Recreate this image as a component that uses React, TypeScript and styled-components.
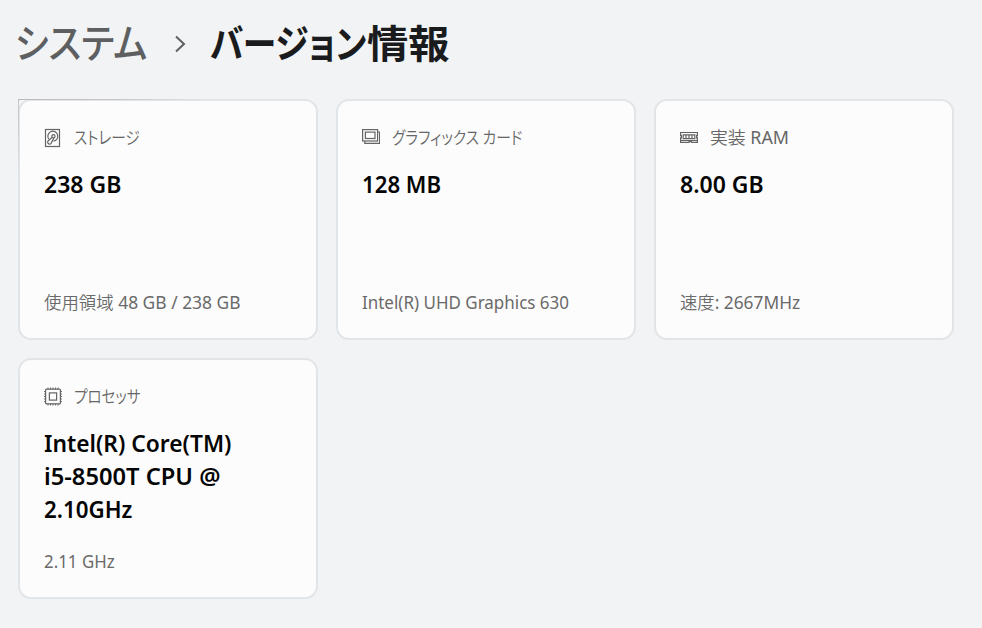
import React from "react";
import styled, { createGlobalStyle } from "styled-components";

const Global = createGlobalStyle`
  * { box-sizing: border-box; }
  body {
    margin: 0;
    background: #f1f3f5;
    font-family: "Noto Sans", "Noto Sans CJK JP", sans-serif;
    overflow: hidden;
  }
`;

const Page = styled.main`
  height: 628px;
  padding: 11px 0 0 18px;
  background: #f1f3f5;
`;

const Breadcrumb = styled.header`
  display: flex;
  align-items: center;
  height: 60px;
  margin: 0 0 28px -3px;
`;

const Crumb = styled.span<{ $current?: boolean; $width: number; $scale: number }>`
  flex: none;
  width: ${(p) => p.$width}px;
  white-space: nowrap;
  font-family: "Noto Sans CJK JP", sans-serif;
  font-size: ${(p) => (p.$current ? 39 : 40)}px;
  line-height: 60px;
  font-weight: ${(p) => (p.$current ? 700 : 500)};
  color: ${(p) => (p.$current ? "#1a1b1c" : "#5d5f61")};
  font-feature-settings: "palt";
  transform: scaleX(${(p) => p.$scale});
  transform-origin: left;
`;

const Chevron = styled.svg`
  flex: none;
  width: 12px;
  height: 18px;
  margin: 5px 24px 0 30px;
`;

const Grid = styled.section`
  display: grid;
  grid-template-columns: repeat(3, 300px);
  grid-auto-rows: 241px;
  gap: 18px;
`;

const Card = styled.article<{ $lit?: boolean }>`
  position: relative;
  display: flex;
  flex-direction: column;
  padding: 23px 24px;
  border: 2px solid #e2e5e8;
  border-radius: 13px;
  background: #fcfcfc;

  &::before {
    content: "";
    display: ${(p) => (p.$lit ? "block" : "none")};
    position: absolute;
    inset: -2px;
    background:
      linear-gradient(to right, #bdb9b9, #c8c5c5 50%, transparent) top left / 190px 1px no-repeat,
      linear-gradient(to bottom, #c4c2c2, transparent) top left / 1px 80px no-repeat;
  }
`;

const CardHead = styled.div`
  display: flex;
  align-items: center;
  height: 26px;
  gap: 12px;

  svg {
    flex: none;
    width: 18px;
    height: 20px;
    margin-top: 2px;
    fill: none;
    stroke: #646464;
    stroke-width: 1.2;
  }
`;

const Cjk = styled.span`
  font-weight: 350;
`;

const Label = styled.span<{ $scale: number }>`
  white-space: nowrap;
  font-size: 17.5px;
  line-height: 26px;
  font-weight: 400;
  color: #666;
  font-feature-settings: "palt";
  transform: scaleX(${(p) => p.$scale});
  transform-origin: left;
`;

const Value = styled.div`
  margin-top: 18px;
`;

const ValueLine = styled.div<{ $scale: number }>`
  white-space: nowrap;
  font-size: 23px;
  line-height: 33px;
  font-weight: 600;
  color: #050505;
  transform: scaleX(${(p) => p.$scale});
  transform-origin: left;
`;

const Detail = styled.div<{ $scale: number }>`
  margin-top: auto;
  white-space: nowrap;
  font-size: 17.5px;
  line-height: 26px;
  font-weight: 400;
  color: #6a6a6a;
  transform: scaleX(${(p) => p.$scale});
  transform-origin: left;
`;

const DiskIcon = () => (
  <svg viewBox="0 0 18 20">
    <rect x="1.5" y="1.5" width="14" height="17" />
    <path d="M4.8 11.2A5 5 0 1 1 9.4 13.2" />
    <circle cx="9.4" cy="8.2" r="1.6" />
    <path d="M8 9.4 4.3 12.8a1.9 1.9 0 1 0 2.6 2.8L9.9 10" />
  </svg>
);

const GraphicsIcon = () => (
  <svg viewBox="0 0 18 20">
    <rect x=".6" y="1.6" width="15" height="11.4" />
    <rect x="3.4" y="4.1" width="9.6" height="6.4" />
    <path d="M15.6 4h2v11.4H2.8V13" />
  </svg>
);

const MemoryIcon = () => (
  <svg viewBox="0 0 18 20">
    <path d="M.6 4.5h16.8v3.1h-.8v2.2h.8v4.7h-6v-1.2H9v1.2H.6V9.8h.8V7.6H.6Z" />
    <path d="M3.2 6.8h11.6v3.8H3.2ZM6 7v3.5M9 7v3.5M12 7v3.5M1 12.6h16" />
  </svg>
);

const ChipIcon = () => (
  <svg viewBox="0 0 18 20">
    <rect x="1.6" y="2.1" width="14.8" height="14.8" rx="1" />
    <rect x="5.4" y="5.9" width="7.2" height="7.2" />
    <path
      d="M4 .5v2m2.5-2v2M9 .5v2m2.5-2v2M14 .5v2M4 16.5v2m2.5-2v2M9 16.5v2m2.5-2v2M14 16.5v2M0 4.5h2M0 7h2M0 9.5h2M0 12h2M0 14.5h2M16 4.5h2M16 7h2m-2 2.5h2M16 12h2m-2 2.5h2"
      strokeWidth=".9"
    />
  </svg>
);

type TextRun = { cjk?: string; text?: string; scale: number };

type Spec = {
  icon: React.ReactNode;
  label: TextRun;
  value: TextRun[];
  detail: TextRun;
  lit?: boolean;
};

const specs: Spec[] = [
  {
    icon: <DiskIcon />,
    label: { cjk: "ストレージ", scale: 0.835 },
    value: [{ text: "238 GB", scale: 1 }],
    detail: { cjk: "使用領域", text: " 48 GB / 238 GB", scale: 0.995 },
    lit: true,
  },
  {
    icon: <GraphicsIcon />,
    label: { cjk: "グラフィックス カード", scale: 0.84 },
    value: [{ text: "128 MB", scale: 0.965 }],
    detail: { text: "Intel(R) UHD Graphics 630", scale: 0.97 },
  },
  {
    icon: <MemoryIcon />,
    label: { cjk: "実装", text: " RAM", scale: 1.02 },
    value: [{ text: "8.00 GB", scale: 1 }],
    detail: { cjk: "速度", text: ": 2667MHz", scale: 0.99 },
  },
  {
    icon: <ChipIcon />,
    label: { cjk: "プロセッサ", scale: 0.83 },
    value: [
      { text: "Intel(R) Core(TM)", scale: 0.99 },
      { text: "i5-8500T CPU @", scale: 1.03 },
      { text: "2.10GHz", scale: 0.97 },
    ],
    detail: { text: "2.11 GHz", scale: 0.965 },
  },
];

const Run = ({ run }: { run: TextRun }) => (
  <>
    {run.cjk && <Cjk>{run.cjk}</Cjk>}
    {run.text}
  </>
);

export default function App() {
  return (
    <>
      <Global />
      <Page>
        <Breadcrumb>
          <Crumb $width={129} $scale={0.908}>システム</Crumb>
          <Chevron viewBox="0 0 12 18" fill="none" stroke="#5d5f61" strokeWidth="2">
            <path d="m2 1.5 8 7.5-8 7.5" />
          </Chevron>
          <Crumb $current $width={157} $scale={0.865}>バージョン</Crumb>
          <Crumb $current $width={84} $scale={1.06}>情報</Crumb>
        </Breadcrumb>
        <Grid>
          {specs.map((s, i) => (
            <Card key={i} $lit={s.lit}>
              <CardHead>
                {s.icon}
                <Label $scale={s.label.scale}><Run run={s.label} /></Label>
              </CardHead>
              <Value>
                {s.value.map((line) => (
                  <ValueLine key={line.text} $scale={line.scale}><Run run={line} /></ValueLine>
                ))}
              </Value>
              <Detail $scale={s.detail.scale}><Run run={s.detail} /></Detail>
            </Card>
          ))}
        </Grid>
      </Page>
    </>
  );
}
